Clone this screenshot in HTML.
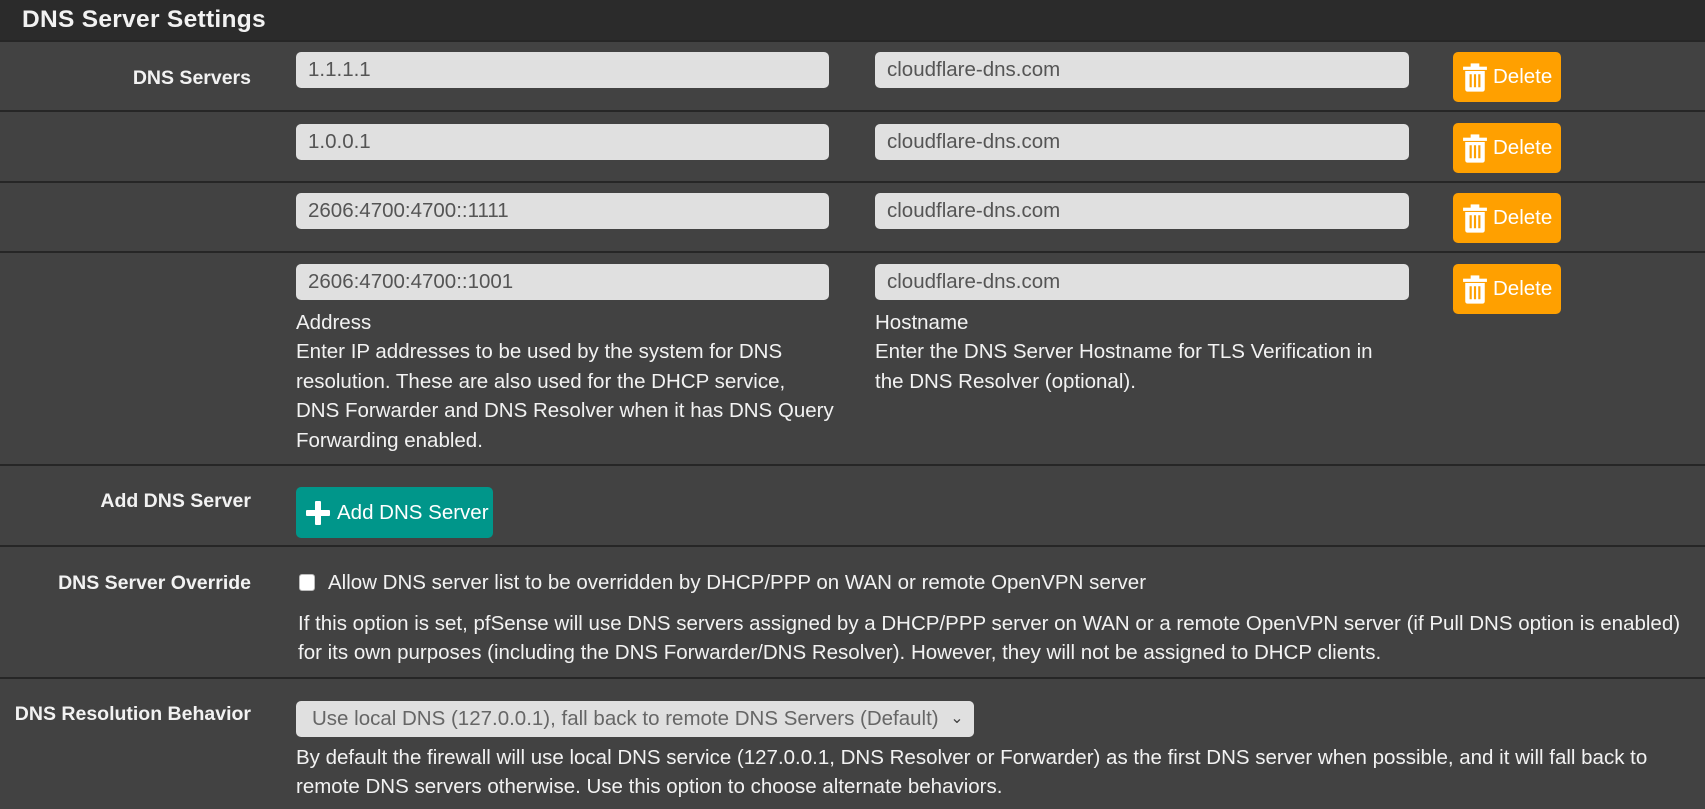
<!DOCTYPE html>
<html><head><meta charset="utf-8"><style>
*{margin:0;padding:0;box-sizing:border-box}
body{width:1705px;height:809px;background:#424242;font-family:"Liberation Sans",Arial,sans-serif;color:#f2f2f2;position:relative;overflow:hidden;font-size:20.5px}
.a{position:absolute}
.hdr{left:0;top:0;width:1705px;height:41px;background:#2b2b2b;font-weight:bold;font-size:24.5px;padding:6px 0 0 22px;letter-spacing:.3px}
.sep{left:0;width:1705px;height:2px;background:#262626}
.lbl{right:1454px;font-weight:bold;font-size:19.5px;white-space:nowrap;line-height:24px}
.in{height:36px;background:#e0e0e0;border-radius:5px;color:#555;padding:0 12px;line-height:36px;font-size:20.5px}
.del{width:108px;height:50px;background:#ffa000;border-radius:5px;color:#fff;font-size:20.5px;line-height:50px;padding-left:40px}
.del svg{position:absolute;left:9px;top:11px}
.t{line-height:29.4px;white-space:nowrap;font-size:20.5px}
</style></head><body>
<div class="a hdr">DNS Server Settings</div>
<div class="a sep" style="top:40px"></div>
<div class="a sep" style="top:110px"></div>
<div class="a sep" style="top:181px"></div>
<div class="a sep" style="top:251px"></div>
<div class="a sep" style="top:464px"></div>
<div class="a sep" style="top:545px"></div>
<div class="a sep" style="top:677px"></div>

<div class="a lbl" style="top:66px">DNS Servers</div>
<div class="a lbl" style="top:489px">Add DNS Server</div>
<div class="a lbl" style="top:571px">DNS Server Override</div>
<div class="a lbl" style="top:702px">DNS Resolution Behavior</div>

<div class="a in" style="left:296px;top:52px;width:533px">1.1.1.1</div>
<div class="a in" style="left:875px;top:52px;width:534px">cloudflare-dns.com</div>
<div class="a in" style="left:296px;top:124px;width:533px">1.0.0.1</div>
<div class="a in" style="left:875px;top:124px;width:534px">cloudflare-dns.com</div>
<div class="a in" style="left:296px;top:193px;width:533px">2606:4700:4700::1111</div>
<div class="a in" style="left:875px;top:193px;width:534px">cloudflare-dns.com</div>
<div class="a in" style="left:296px;top:264px;width:533px">2606:4700:4700::1001</div>
<div class="a in" style="left:875px;top:264px;width:534px">cloudflare-dns.com</div>

<div class="a del" style="left:1453px;top:52px"><svg width="26" height="29" viewBox="0 0 24 26"><rect x="1" y="3" width="22" height="3" fill="#fff"/><rect x="8" y="0" width="8" height="4" fill="#fff"/><path d="M3 7h18v17a2 2 0 0 1-2 2H5a2 2 0 0 1-2-2z" fill="#fff"/><rect x="7" y="10" width="2" height="12" fill="#ffa000"/><rect x="11" y="10" width="2" height="12" fill="#ffa000"/><rect x="15" y="10" width="2" height="12" fill="#ffa000"/></svg>Delete</div>
<div class="a del" style="left:1453px;top:123px"><svg width="26" height="29" viewBox="0 0 24 26"><rect x="1" y="3" width="22" height="3" fill="#fff"/><rect x="8" y="0" width="8" height="4" fill="#fff"/><path d="M3 7h18v17a2 2 0 0 1-2 2H5a2 2 0 0 1-2-2z" fill="#fff"/><rect x="7" y="10" width="2" height="12" fill="#ffa000"/><rect x="11" y="10" width="2" height="12" fill="#ffa000"/><rect x="15" y="10" width="2" height="12" fill="#ffa000"/></svg>Delete</div>
<div class="a del" style="left:1453px;top:193px"><svg width="26" height="29" viewBox="0 0 24 26"><rect x="1" y="3" width="22" height="3" fill="#fff"/><rect x="8" y="0" width="8" height="4" fill="#fff"/><path d="M3 7h18v17a2 2 0 0 1-2 2H5a2 2 0 0 1-2-2z" fill="#fff"/><rect x="7" y="10" width="2" height="12" fill="#ffa000"/><rect x="11" y="10" width="2" height="12" fill="#ffa000"/><rect x="15" y="10" width="2" height="12" fill="#ffa000"/></svg>Delete</div>
<div class="a del" style="left:1453px;top:264px"><svg width="26" height="29" viewBox="0 0 24 26"><rect x="1" y="3" width="22" height="3" fill="#fff"/><rect x="8" y="0" width="8" height="4" fill="#fff"/><path d="M3 7h18v17a2 2 0 0 1-2 2H5a2 2 0 0 1-2-2z" fill="#fff"/><rect x="7" y="10" width="2" height="12" fill="#ffa000"/><rect x="11" y="10" width="2" height="12" fill="#ffa000"/><rect x="15" y="10" width="2" height="12" fill="#ffa000"/></svg>Delete</div>

<div class="a t" style="left:296px;top:308px">Address<br>Enter IP addresses to be used by the system for DNS<br>resolution. These are also used for the DHCP service,<br>DNS Forwarder and DNS Resolver when it has DNS Query<br>Forwarding enabled.</div>
<div class="a t" style="left:875px;top:308px">Hostname<br>Enter the DNS Server Hostname for TLS Verification in<br>the DNS Resolver (optional).</div>

<div class="a" style="left:296px;top:487px;width:197px;height:51px;background:#00968a;border-radius:5px;color:#fff;font-size:20.5px;line-height:51px;padding-left:41px;white-space:nowrap"><svg style="position:absolute;left:10px;top:14px" width="24" height="24" viewBox="0 0 24 24"><rect x="9" y="0" width="6" height="24" rx="1" fill="#fff"/><rect x="0" y="9" width="24" height="6" rx="1" fill="#fff"/></svg>Add DNS Server</div>

<div class="a" style="left:299px;top:574px;width:16px;height:17px;background:#fff;border-radius:3px;border:1px solid #bbb"></div>
<div class="a t" style="left:328px;top:568px">Allow DNS server list to be overridden by DHCP/PPP on WAN or remote OpenVPN server</div>
<div class="a t" style="left:298px;top:609px">If this option is set, pfSense will use DNS servers assigned by a DHCP/PPP server on WAN or a remote OpenVPN server (if Pull DNS option is enabled)<br>for its own purposes (including the DNS Forwarder/DNS Resolver). However, they will not be assigned to DHCP clients.</div>

<div class="a in" style="left:296px;top:701px;width:678px;color:#666;padding-left:16px;overflow:hidden;white-space:nowrap">Use local DNS (127.0.0.1), fall back to remote DNS Servers (Default)<span style="position:absolute;right:0;top:0;width:34px;height:36px;background:#e0e0e0;border-radius:0 5px 5px 0;text-align:center;color:#444;font-size:16px">&#8964;</span></div>
<div class="a t" style="left:296px;top:743px">By default the firewall will use local DNS service (127.0.0.1, DNS Resolver or Forwarder) as the first DNS server when possible, and it will fall back to<br>remote DNS servers otherwise. Use this option to choose alternate behaviors.</div>
</body></html>
